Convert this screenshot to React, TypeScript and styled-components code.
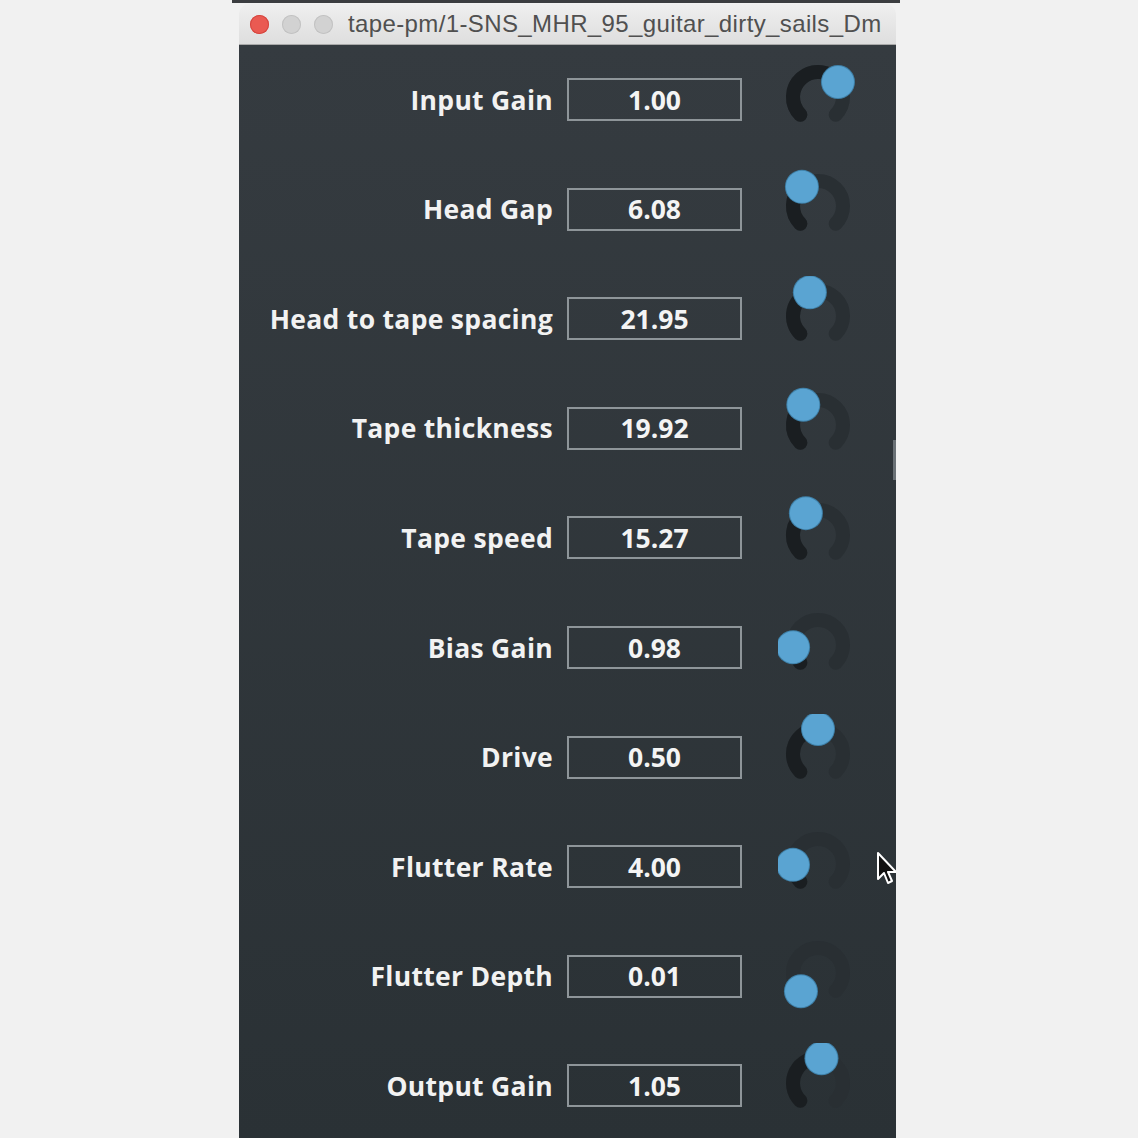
import React from "react";
import styled, { createGlobalStyle } from "styled-components";

const Global = createGlobalStyle`
  html, body { margin: 0; padding: 0; background: #f1f1f1; }
  body { width: 1138px; height: 1138px; overflow: hidden; }
`;

const Page = styled.div`
  height: 1138px;
  display: flex;
  flex-direction: column;
  overflow: hidden;
`;

const TopStrip = styled.div`
  height: 3px;
  margin: 0 238px 0 232px;
  background: #3b3d40;
  flex-shrink: 0;
`;

const WindowFrame = styled.div`
  margin-left: 239px;
  width: 657px;
  flex: 1;
  display: flex;
  flex-direction: column;
  position: relative;
  border-radius: 10px 10px 0 0;
  overflow: hidden;
  margin-top: 1px;
`;

const TitleBar = styled.div`
  height: 40px;
  flex-shrink: 0;
  display: flex;
  align-items: center;
  padding-left: 11px;
  gap: 13px;
  background: linear-gradient(#efefef, #dedede);
  border-bottom: 1px solid #a9a9a9;
`;

const Light = styled.span<{ $color: string; $edge: string }>`
  width: 19px;
  height: 19px;
  border-radius: 50%;
  background: ${(p) => p.$color};
  box-shadow: inset 0 0 0 1px ${(p) => p.$edge};
  flex-shrink: 0;
`;

const Title = styled.span`
  margin-left: 2px;
  font-family: "Liberation Sans", Arial, sans-serif;
  font-size: 24px;
  color: #505050;
  white-space: nowrap;
  letter-spacing: 0.38px;
`;

const Panel = styled.div`
  flex: 1;
  background: linear-gradient(#353b40, #2a3135);
  display: flex;
  flex-direction: column;
  position: relative;
`;

const Row = styled.div`
  height: 109.55px;
  flex-shrink: 0;
  display: grid;
  grid-template-columns: 314px 175px 1fr;
  column-gap: 14px;
  align-items: center;
`;

const Label = styled.div`
  text-align: right;
  font-family: "Open Sans", "DejaVu Sans", sans-serif;
  font-weight: 700;
  font-size: 26.5px;
  letter-spacing: 0.3px;
  color: #f2f2f2;
  white-space: nowrap;
`;

const ValueBox = styled.div`
  height: 43px;
  box-sizing: border-box;
  border: 2px solid #8e9599;
  display: flex;
  align-items: center;
  justify-content: center;
  font-family: "Open Sans", "DejaVu Sans", sans-serif;
  font-weight: 700;
  font-size: 26.5px;
  color: #f4f4f4;
`;

const KnobCell = styled.div`
  margin-left: -14px;
  display: flex;
  justify-content: center;
  padding-bottom: 6px;
  padding-right: 2px;
`;

const ScrollHint = styled.div`
  position: absolute;
  right: 0;
  top: 395px;
  width: 3px;
  height: 40px;
  background: #6a7176;
`;

const Cursor = styled.svg`
  position: absolute;
  left: 637px;
  top: 806px;
`;

const C = 40;
const R = 25;

const pt = (deg: number) => {
  const a = (deg * Math.PI) / 180;
  return [C + R * Math.sin(a), C - R * Math.cos(a)];
};

const arc = (a1: number, a2: number) => {
  const [x1, y1] = pt(a1);
  const [x2, y2] = pt(a2);
  const large = a2 - a1 > 180 ? 1 : 0;
  return `M ${x1} ${y1} A ${R} ${R} 0 ${large} 1 ${x2} ${y2}`;
};

const Knob: React.FC<{ angle: number }> = ({ angle }) => {
  const [tx, ty] = pt(angle);
  return (
    <svg width="80" height="80" viewBox="0 0 80 80">
      <path d={arc(-135, 135)} fill="none" stroke="#292f33" strokeWidth="14" strokeLinecap="round" />
      {angle > -134 && (
        <path d={arc(-135, angle)} fill="none" stroke="#1a1e21" strokeWidth="14" strokeLinecap="round" />
      )}
      <circle cx={tx} cy={ty} r="17" fill="#3f80a8" />
      <circle cx={tx} cy={ty} r="16" fill="#5aa4d2" />
    </svg>
  );
};

const rows = [
  { label: "Input Gain", value: "1.00", angle: 53 },
  { label: "Head Gap", value: "6.08", angle: -40 },
  { label: "Head to tape spacing", value: "21.95", angle: -19 },
  { label: "Tape thickness", value: "19.92", angle: -36 },
  { label: "Tape speed", value: "15.27", angle: -29 },
  { label: "Bias Gain", value: "0.98", angle: -95 },
  { label: "Drive", value: "0.50", angle: 0 },
  { label: "Flutter Rate", value: "4.00", angle: -92 },
  { label: "Flutter Depth", value: "0.01", angle: -137 },
  { label: "Output Gain", value: "1.05", angle: 8 },
];

export default function App() {
  return (
    <Page>
      <Global />
      <TopStrip />
      <WindowFrame>
        <TitleBar>
          <Light $color="#ea5a52" $edge="#d4463f" />
          <Light $color="#d2d2d2" $edge="#c2c2c2" />
          <Light $color="#d2d2d2" $edge="#c2c2c2" />
          <Title>tape-pm/1-SNS_MHR_95_guitar_dirty_sails_Dm</Title>
        </TitleBar>
        <Panel>
          {rows.map((r) => (
            <Row key={r.label}>
              <Label>{r.label}</Label>
              <ValueBox>{r.value}</ValueBox>
              <KnobCell>
                <Knob angle={r.angle} />
              </KnobCell>
            </Row>
          ))}
          <ScrollHint />
          <Cursor width="22" height="36" viewBox="0 0 22 36">
            <path d="M2 2 L2 28 L8 22 L12 32 L16 30 L12 21 L20 21 Z" fill="#111" stroke="#fff" strokeWidth="2" strokeLinejoin="round" />
          </Cursor>
        </Panel>
      </WindowFrame>
    </Page>
  );
}
